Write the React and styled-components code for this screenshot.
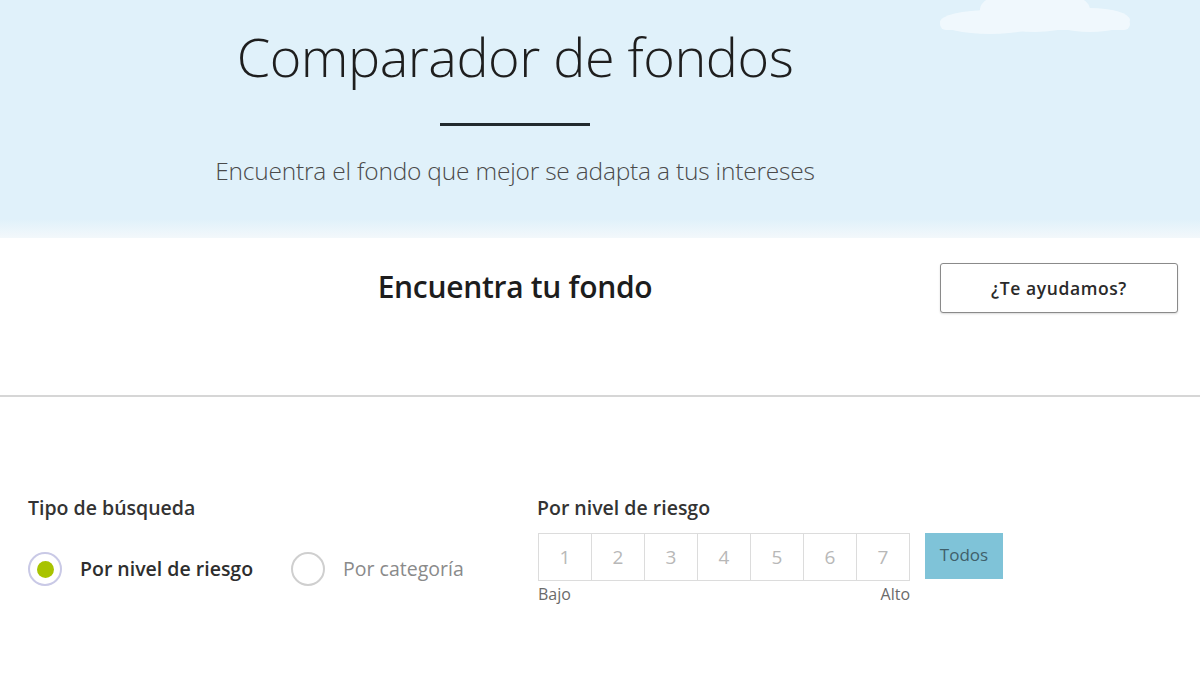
import React from 'react';
import styled, { createGlobalStyle } from 'styled-components';

const GlobalStyle = createGlobalStyle`
  html, body {
    margin: 0;
    padding: 0;
    background: #fff;
    font-family: 'Open Sans', 'Liberation Sans', sans-serif;
    color: #222;
  }
`;

const Page = styled.div`
  width: 1200px;
  height: 675px;
  overflow: hidden;
  background: #fff;
`;

const Hero = styled.header`
  position: relative;
  height: 238px;
  background: linear-gradient(180deg, #e0f1fa 0%, #e0f1fa 92%, #f3f8fb 100%);
  display: flex;
  flex-direction: column;
  align-items: center;
  padding-right: 170px;
  box-sizing: border-box;
`;

const Cloud = styled.svg`
  position: absolute;
  top: 0;
  left: 930px;
  opacity: 0.75;
`;

const Title = styled.h1`
  margin: 18px 0 0;
  font-size: 54px;
  font-weight: 300;
  letter-spacing: -0.5px;
  line-height: 76px;
  color: #1e1e1e;
`;

const Divider = styled.div`
  width: 150px;
  height: 3px;
  margin-top: 29px;
  background: #222a2e;
`;

const Subtitle = styled.p`
  margin: 28px 0 0;
  font-size: 24.5px;
  font-weight: 300;
  color: #4a4a4a;
  letter-spacing: -0.2px;
`;

const FinderHead = styled.section`
  display: flex;
  align-items: flex-start;
  padding: 25px 22px 0 90px;
  height: 159px;
  box-sizing: border-box;
  border-bottom: 2px solid #d6d6d6;
`;

const FinderTitle = styled.h2`
  flex: 1;
  margin: 3px 0 0;
  text-align: center;
  font-size: 30px;
  font-weight: 600;
  color: #1d1d1d;
  letter-spacing: -0.3px;
`;

const HelpButton = styled.button`
  width: 238px;
  height: 50px;
  background: #fff;
  border: 1px solid #8a8a8a;
  border-radius: 3px;
  box-shadow: 0 1px 2px rgba(0, 0, 0, 0.15);
  font-family: inherit;
  font-size: 17.5px;
  font-weight: 600;
  letter-spacing: 0.6px;
  color: #2a2a2a;
`;

const Filters = styled.section`
  display: grid;
  grid-template-columns: 509px auto;
  padding: 98px 0 0 28px;
`;

const Group = styled.div`
  display: flex;
  flex-direction: column;
`;

const GroupLabel = styled.div`
  font-size: 19.5px;
  font-weight: 600;
  color: #333;
  line-height: 26px;
`;

const Radios = styled.div`
  display: flex;
  align-items: center;
  gap: 38px;
  margin-top: 31px;
`;

const RadioOption = styled.label`
  display: flex;
  align-items: center;
  gap: 18px;
  font-size: 19.5px;
  line-height: 34px;
  font-weight: ${(p) => (p.$checked ? 600 : 400)};
  color: ${(p) => (p.$checked ? '#2e2e2e' : '#8a8a8a')};
`;

const RadioCircle = styled.span`
  width: 30px;
  height: 30px;
  border-radius: 50%;
  border: 2px solid ${(p) => (p.$checked ? '#c9c9e6' : '#cfcfcf')};
  display: flex;
  align-items: center;
  justify-content: center;
  background: #fff;
  &::after {
    content: '';
    width: 17px;
    height: 17px;
    border-radius: 50%;
    background: ${(p) => (p.$checked ? '#a8c300' : 'transparent')};
  }
`;

const ScaleRow = styled.div`
  display: flex;
  align-items: flex-start;
  margin-top: 12px;
`;

const Scale = styled.div`
  display: flex;
  flex-direction: column;
  margin-left: 1px;
`;

const Cells = styled.div`
  display: flex;
  border: 1px solid #dcdcdc;
`;

const Cell = styled.div`
  width: 52px;
  height: 46px;
  display: flex;
  align-items: center;
  justify-content: center;
  font-size: 19px;
  color: #b8b8b8;
  & + & {
    border-left: 1px solid #dcdcdc;
  }
`;

const Ends = styled.div`
  display: flex;
  justify-content: space-between;
  font-size: 16px;
  line-height: 22px;
  color: #6a6a6a;
  margin-top: 2px;
`;

const AllButton = styled.button`
  width: 78px;
  height: 46px;
  margin-left: 15px;
  border: none;
  background: #7fc3d8;
  font-family: inherit;
  font-size: 17px;
  color: #3f5f6a;
  padding-bottom: 4px;
`;

export default function App() {
  return (
    <Page>
      <GlobalStyle />
      <Hero>
        <Cloud width="210" height="34" viewBox="0 0 210 34">
          <g fill="#f6fbfe">
            <ellipse cx="60" cy="22" rx="50" ry="12" />
            <ellipse cx="105" cy="10" rx="55" ry="22" />
            <ellipse cx="160" cy="20" rx="40" ry="12" />
            <rect x="10" y="18" width="190" height="12" rx="6" />
          </g>
        </Cloud>
        <Title>Comparador de fondos</Title>
        <Divider />
        <Subtitle>Encuentra el fondo que mejor se adapta a tus intereses</Subtitle>
      </Hero>

      <FinderHead>
        <FinderTitle>Encuentra tu fondo</FinderTitle>
        <HelpButton>¿Te ayudamos?</HelpButton>
      </FinderHead>

      <Filters>
        <Group>
          <GroupLabel>Tipo de búsqueda</GroupLabel>
          <Radios>
            <RadioOption $checked>
              <RadioCircle $checked />
              Por nivel de riesgo
            </RadioOption>
            <RadioOption>
              <RadioCircle />
              Por categoría
            </RadioOption>
          </Radios>
        </Group>
        <Group>
          <GroupLabel>Por nivel de riesgo</GroupLabel>
          <ScaleRow>
            <Scale>
              <Cells>
                {[1, 2, 3, 4, 5, 6, 7].map((n) => (
                  <Cell key={n}>{n}</Cell>
                ))}
              </Cells>
              <Ends>
                <span>Bajo</span>
                <span>Alto</span>
              </Ends>
            </Scale>
            <AllButton>Todos</AllButton>
          </ScaleRow>
        </Group>
      </Filters>
    </Page>
  );
}
